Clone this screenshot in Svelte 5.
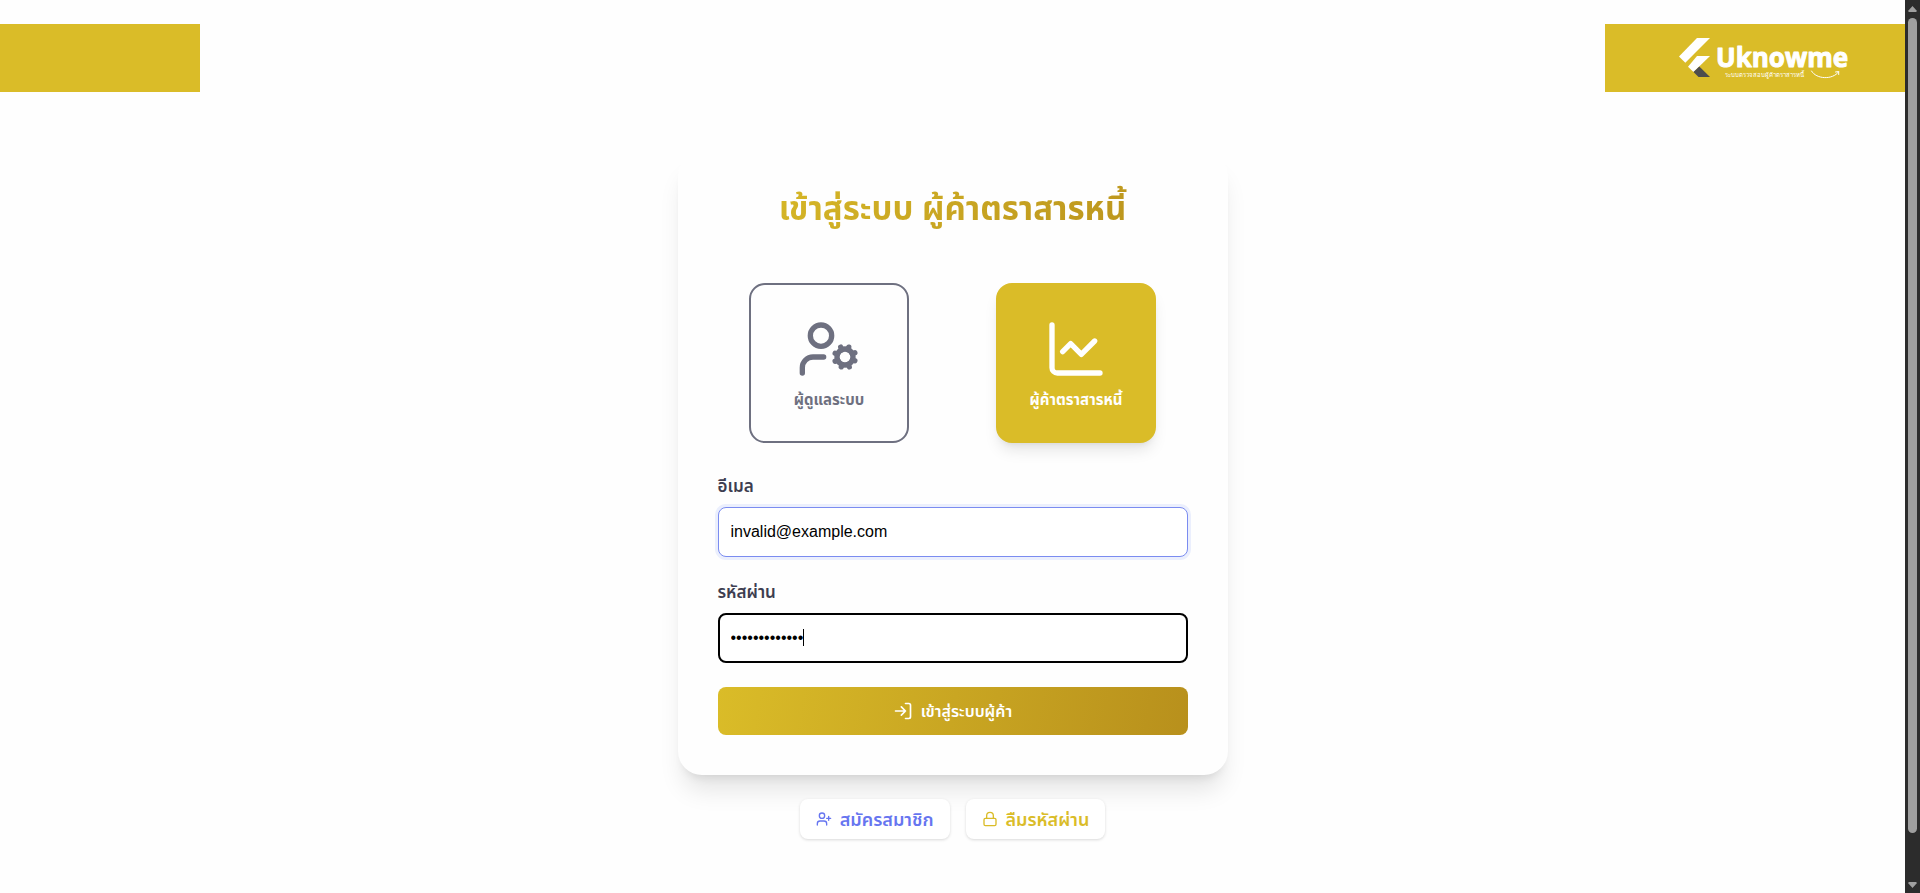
<script>
  import { onMount } from 'svelte';

  let role = $state('dealer');
  let email = $state('invalid@example.com');
  let password = $state('password12345');
  let passwordField;

  onMount(() => passwordField.focus());
</script>

{#snippet icon(name, size)}
  <svg class="icon" width={size} height={size} viewBox="0 0 24 24" aria-hidden="true">
    {#if name === 'admin'}
      <circle cx="9" cy="7" r="4" />
      <path d="M10 15H6a4 4 0 0 0-4 4v2" />
      <circle cx="18" cy="15" r="3" />
      <path d="m21.7 16.4-.9-.3M15.2 13.9l-.9-.3M16.6 18.7l.3-.9M19.1 12.2l.3-.9M19.6 18.7l-.4-1M16.8 12.3l-.4-1M14.3 16.6l1-.4M20.7 13.8l1-.4" />
    {:else if name === 'chart'}
      <path d="M3 3v16a2 2 0 0 0 2 2h16" />
      <path d="m19 9-5 5-4-4-3 3" />
    {:else if name === 'login'}
      <path d="M15 3h4a2 2 0 0 1 2 2v14a2 2 0 0 1-2 2h-4" />
      <path d="m10 17 5-5-5-5M15 12H3" />
    {:else if name === 'register'}
      <circle cx="9" cy="7" r="4" />
      <path d="M16 21v-2a4 4 0 0 0-4-4H6a4 4 0 0 0-4 4v2M19 8v6M22 11h-6" />
    {:else if name === 'lock'}
      <rect x="3" y="11" width="18" height="11" rx="2" />
      <path d="M7 11V7a5 5 0 0 1 10 0v4" />
    {/if}
  </svg>
{/snippet}

<div class="window">
  <div class="page">
    <header>
      <div class="bar left"></div>
      <div class="bar right">
        <svg class="logo" width="180" height="52" viewBox="0 0 180 52" role="img" aria-label="Uknowme">
          <path fill="#fff" d="M27 6h13L15.300 30.700 9 24.500z" />
          <path fill="#fff" d="M27 24h13L23.500 40 18 34.700z" />
          <path fill="#4d4d4d" d="M23.500 40 29.300 34.500 40 45H28.500z" />
          <text class="brand" x="46" y="35">Uknowme</text>
          <text class="tagline" x="55" y="45">ระบบตรวจสอบผู้ค้าตราสารหนี้</text>
          <path class="smile" d="M141.500 39c5 8.500 21 9 27 1M165.500 40l3.200-.500 0 3" />
        </svg>
      </div>
    </header>

    <main>
      <section class="card">
        <h1>เข้าสู่ระบบ ผู้ค้าตราสารหนี้</h1>
        <div class="roles">
          <button type="button" class="role" class:active={role === 'admin'} onclick={() => (role = 'admin')}>
            {@render icon('admin', 64)}
            <span>ผู้ดูแลระบบ</span>
          </button>
          <button type="button" class="role" class:active={role === 'dealer'} onclick={() => (role = 'dealer')}>
            {@render icon('chart', 64)}
            <span>ผู้ค้าตราสารหนี้</span>
          </button>
        </div>
        <form onsubmit={(e) => e.preventDefault()}>
          <div class="field">
            <label for="email">อีเมล</label>
            <input id="email" class="email" type="email" bind:value={email} />
          </div>
          <div class="field">
            <label for="password">รหัสผ่าน</label>
            <div class="entry">
              <input id="password" class="password" type="password" bind:value={password} bind:this={passwordField} />
              <i class="caret"></i>
            </div>
          </div>
          <button class="submit">
            {@render icon('login', 20)}
            <span>เข้าสู่ระบบผู้ค้า</span>
          </button>
        </form>
      </section>
      <nav>
        <a class="register" href="#register">{@render icon('register', 16)}<span>สมัครสมาชิก</span></a>
        <a class="forgot" href="#forgot">{@render icon('lock', 16)}<span>ลืมรหัสผ่าน</span></a>
      </nav>
    </main>
  </div>

  <div class="scrollbar" aria-hidden="true">
    <svg width="9" height="6" viewBox="0 0 9 6"><path d="M4.500 0 9 5 8 6H1L0 5z" /></svg>
    <div class="track"><div class="thumb"></div></div>
    <svg width="9" height="6" viewBox="0 0 9 6"><path d="M4.500 6 9 1 8 0H1L0 1z" /></svg>
  </div>
</div>

<style>
  * { box-sizing: border-box; }
  :global(body) { background: #fefefe; overflow: hidden; }
  .window {
    display: grid;
    grid-template-columns: 1fr 15px;
    height: 100vh;
    font-family: "Noto Sans", "Noto Sans Thai", sans-serif;
  }
  .page { overflow: hidden; }
  header { display: flex; justify-content: space-between; padding-top: 24px; }
  .bar { height: 68px; background: #dabc28; }
  .left { width: 200px; }
  .right { width: 300px; display: flex; align-items: center; justify-content: center; padding-left: 10px; }
  .brand {
    font: 700 26px "Open Sans", sans-serif;
    fill: #fff;
    stroke: #fff;
    stroke-width: 1;
    stroke-linejoin: round;
  }
  .tagline { font: 6px "Noto Sans", sans-serif; fill: #fff; }
  .smile { fill: none; stroke: #fff; stroke-width: 1; stroke-linecap: round; }

  main { display: flex; flex-direction: column; align-items: center; gap: 24px; padding: 60px 16px 40px; }
  .card {
    width: 100%;
    max-width: 550px;
    padding: 32px 40px 40px;
    border-radius: 24px;
    background: #fefefe;
    box-shadow: 0 20px 25px -5px rgba(0, 0, 0, 0.1), 0 8px 10px -6px rgba(0, 0, 0, 0.1);
  }
  h1 {
    margin: 0 0 51px;
    text-align: center;
    font-size: 33px;
    line-height: 48px;
    font-weight: 700;
    color: transparent;
    background: linear-gradient(135deg, #dabc28, #b8901c);
    background-clip: text;
  }
  .icon { flex: none; fill: none; stroke: currentColor; stroke-width: 2; stroke-linecap: round; stroke-linejoin: round; }
  .roles { display: grid; grid-template-columns: 1fr 1fr; gap: 24px; justify-items: center; margin-bottom: 31px; }
  button { font-family: inherit; cursor: pointer; }
  .role {
    display: flex;
    flex-direction: column;
    align-items: center;
    justify-content: center;
    gap: 8px;
    width: 160px;
    height: 160px;
    padding: 0;
    border: 2px solid #6e7080;
    border-radius: 16px;
    background: #fefefe;
    color: #6e7080;
    font-size: 15px;
    line-height: 20px;
    font-weight: 700;
  }
  .role.active {
    border-color: #dabc28;
    background: #dabc28;
    color: #fff;
    box-shadow: 0 10px 15px -3px rgba(0, 0, 0, 0.1), 0 4px 6px -4px rgba(0, 0, 0, 0.1);
  }
  form { display: flex; flex-direction: column; gap: 24px; }
  .field { display: flex; flex-direction: column; gap: 9px; }
  .field + .field { margin-top: -1px; }
  label { font-size: 17px; line-height: 24px; font-weight: 600; color: #3d3d50; }
  input {
    display: block;
    width: 100%;
    height: 50px;
    border: 1px solid #7b8cf0;
    border-radius: 8px;
    padding: 0 12px;
    background: #fff;
    color: #000;
    font: 16px "Liberation Sans", sans-serif;
    outline: none;
  }
  .email { box-shadow: 0 0 0 3px #ebeffd; }
  .entry { position: relative; }
  .password { border: 2px solid #000; padding: 0 11px; caret-color: transparent; }
  .caret { position: absolute; left: 85px; top: 16px; width: 1px; height: 17px; background: #000; }
  .submit {
    display: flex;
    align-items: center;
    justify-content: center;
    gap: 8px;
    height: 48px;
    border: 0;
    border-radius: 8px;
    background: linear-gradient(100deg, #dabc28, #b8901c);
    color: #fff;
    font-size: 16px;
    line-height: 24px;
    font-weight: 600;
  }
  nav { display: flex; gap: 16px; }
  a {
    display: flex;
    align-items: center;
    gap: 8px;
    height: 40px;
    padding: 0 16px;
    border-radius: 8px;
    background: #fff;
    box-shadow: 0 1px 3px rgba(0, 0, 0, 0.15);
    font-size: 18px;
    line-height: 24px;
    font-weight: 600;
    text-decoration: none;
  }
  .register { color: #6675f0; }
  .forgot { color: #dabc28; }

  .scrollbar {
    display: flex;
    flex-direction: column;
    align-items: center;
    gap: 6px;
    padding: 6px 0 5px;
    background: #2c2c2c;
  }
  .scrollbar svg { fill: #9f9f9f; }
  .track { flex: 1; width: 9px; }
  .thumb { height: 95%; border-radius: 5px; background: #9f9f9f; }
</style>
